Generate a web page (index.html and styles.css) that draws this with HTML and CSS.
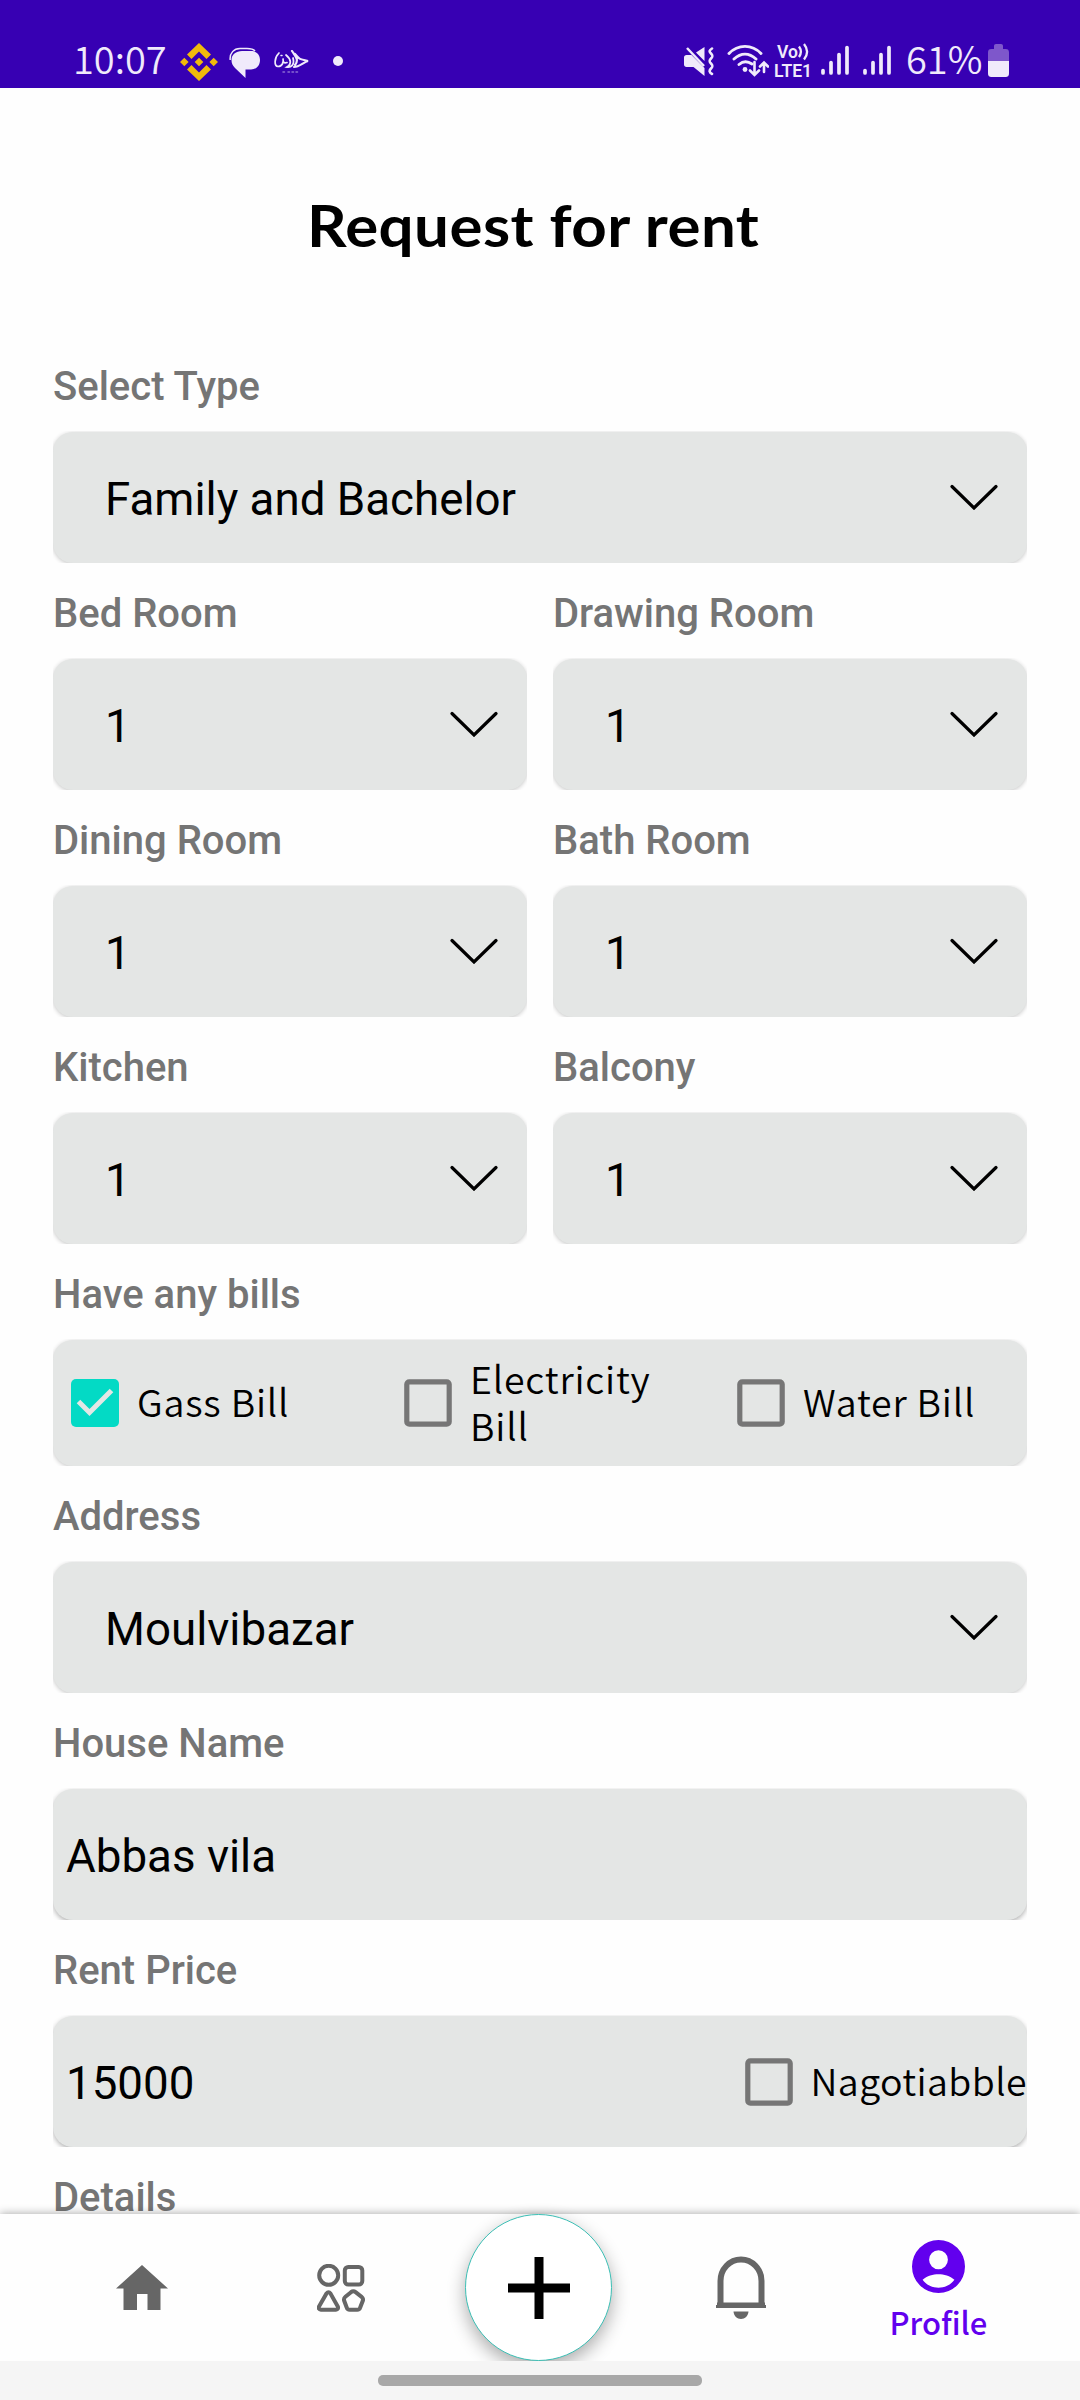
FILE: index.html
```html
<!DOCTYPE html>
<html lang="en">
<head>
<meta charset="utf-8">
<title>Request for rent</title>
<link rel="stylesheet" href="styles.css">
</head>
<body>
<svg class="defs" width="0" height="0" aria-hidden="true">
  <symbol id="chevron" viewBox="0 0 48 26"><path d="M2 2.500 24 24 46 2.500" fill="none" stroke="#000" stroke-width="3.200" stroke-linecap="round"/></symbol>
  <symbol id="box" viewBox="0 0 48 48"><rect x="2.800" y="2.800" width="42.400" height="42.400" rx="2.500" fill="none" stroke="#767676" stroke-width="5.200"/></symbol>
  <symbol id="signal" viewBox="0 0 28 30"><path d="M2 25.500v2.500M10 17.500v10.500M18 9.500v18.500M26 2.500v25.500" fill="none" stroke="#f0eafb" stroke-width="3.700" stroke-linecap="round"/></symbol>
</svg>
<div class="phone">
  <header class="status">
    <div class="status-left">
      <span class="clock">10:07</span>
      <svg class="coin" width="38" height="38" viewBox="0 0 38 38" fill="#f0b90b"><path d="m19 0 12 11.500-4.500 4.500L19 8.500 11.500 16 7 11.500zM19 38 7 26.500l4.500-4.500 7.500 7.500 7.500-7.500 4.500 4.500zM4.300 14.700 8.600 19l-4.300 4.300L0 19zM19 14.700l4.300 4.300-4.300 4.300-4.300-4.300zM33.700 14.700 38 19l-4.300 4.300-4.300-4.300z"/></svg>
      <svg class="chat" width="32" height="32" viewBox="0 0 32 32"><path d="M1.200 13C.5 6 5 1.500 11 1.500h7c4 0 6.500.700 8 2.500" fill="none" stroke="#f0eafb" stroke-width="1.500"/><path d="M13 4h9c5.500 0 9 3.600 9 9s-3.500 9.500-9 9.500h-5.500V31L6 21C3.500 18.500 2.500 16 2.500 13c0-5.500 4.500-9 10.500-9z" fill="#f0eafb"/></svg>
      <svg class="emblem" width="36" height="24" viewBox="0 0 36 24" fill="none" stroke="#f0eafb" stroke-linecap="round"><path d="M5 3C0 8 0 16 4 16.500c4 0 6-4 5-8 0 4 1 5 4 4" stroke-width="1.700"/><path d="M12 5c5 4 6 9 1 12 4 .5 8-2 6-9" stroke-width="1.800"/><path d="M18 1c4 6 7 9 3 14M21 4c4 5 4 5 13 7-4 1-9 6-14 6" stroke-width="2.200"/><path d="M7 5.500h1" stroke-width="1.500"/><path d="M9 22h1.500M14 22h1.500M18 22h1.500M22 22h1.500" stroke="#8b6bd3" stroke-width="1.500"/></svg>
      <span class="dot"></span>
    </div>
    <div class="status-right">
      <svg class="mute" width="30" height="32" viewBox="0 0 30 32"><path d="M0 12.500c0-1.500 1-2.500 2.500-2.500h5l13 13v8L9.500 22h-7C1 22 0 21 0 19.500zM12 7.500 20.500 2v14z" fill="#f0eafb"/><path d="M3 3l17 18" stroke="#f0eafb" stroke-width="2.500"/><path d="M28 3.500c-3 2-3 3-1 5s2 3 0 5-2 3 0 5 2 3 0 5-2 4 1 5.500" fill="none" stroke="#f0eafb" stroke-width="2.600" stroke-linecap="round"/></svg>
      <svg class="wifi" width="42" height="33" viewBox="0 0 42 33" fill="none" stroke="#f0eafb" stroke-width="2.900" stroke-linecap="round"><path d="M2 9.500C11 0 25 0 34 9.500M7 15c7-6.500 15-6.500 22 0M12 20.500c4-3.500 8-4 13-.5"/><circle cx="18" cy="25.500" r="2.400" fill="#f0eafb" stroke="none"/><path d="M27.500 18v12M23 26.500l4.500 4.500 4.500-4.500M37 28V18.500M33 22.500l4-4 4 4" stroke-width="2.600"/></svg>
      <span class="volte"><span class="vo">Vo<svg width="11" height="18" viewBox="0 0 11 18" fill="none" stroke="#f0eafb" stroke-width="2.300"><path d="M1 3.500c2.500 3.500 2.500 7 0 10.500M6 1c4 5 4 10.500 0 15.500"/></svg></span><span class="lte">LTE1</span></span>
      <svg class="signal-a" width="28" height="30"><use href="#signal"/></svg>
      <svg class="signal-b" width="28" height="30"><use href="#signal"/></svg>
      <span class="percent">61%</span>
      <svg class="battery" width="21" height="33" viewBox="0 0 21 33"><path d="M6 5V2c0-1.200.8-2 2-2h5c1.200 0 2 .8 2 2v3h2.500C20 5 21 6 21 8.500V17H0V8.500C0 6 1 5 3.500 5z" fill="#7e57cb"/><path d="M0 17h21v12c0 3-1 4-4 4H4c-3 0-4-1-4-4z" fill="#f0eafb"/></svg>
    </div>
  </header>

  <main class="content">
    <h1 class="title"><span>Request for rent</span></h1>
    <div class="form">
      <section class="field wide"><div class="label">Select Type</div><div class="clip"><div class="card select"><span>Family and Bachelor</span><svg class="chev"><use href="#chevron"/></svg></div></div></section>
      <section class="field"><div class="label">Bed Room</div><div class="clip"><div class="card select"><span>1</span><svg class="chev"><use href="#chevron"/></svg></div></div></section>
      <section class="field"><div class="label">Drawing Room</div><div class="clip"><div class="card select"><span>1</span><svg class="chev"><use href="#chevron"/></svg></div></div></section>
      <section class="field"><div class="label">Dining Room</div><div class="clip"><div class="card select"><span>1</span><svg class="chev"><use href="#chevron"/></svg></div></div></section>
      <section class="field"><div class="label">Bath Room</div><div class="clip"><div class="card select"><span>1</span><svg class="chev"><use href="#chevron"/></svg></div></div></section>
      <section class="field"><div class="label">Kitchen</div><div class="clip"><div class="card select"><span>1</span><svg class="chev"><use href="#chevron"/></svg></div></div></section>
      <section class="field"><div class="label">Balcony</div><div class="clip"><div class="card select"><span>1</span><svg class="chev"><use href="#chevron"/></svg></div></div></section>
      <section class="field wide"><div class="label">Have any bills</div>
        <div class="clip bills"><div class="card checks">
          <div class="check"><svg class="tick" viewBox="0 0 48 48"><rect width="48" height="48" rx="5" fill="#03dac5"/><path d="M7.500 22.500 18.500 33.500 40.500 11.500" fill="none" stroke="#e3e7e5" stroke-width="5"/></svg><span>Gass Bill</span></div>
          <div class="check"><svg class="tick"><use href="#box"/></svg><span>Electricity<br>Bill</span></div>
          <div class="check"><svg class="tick"><use href="#box"/></svg><span>Water Bill</span></div>
        </div></div>
      </section>
      <section class="field wide"><div class="label">Address</div><div class="clip"><div class="card select"><span>Moulvibazar</span><svg class="chev"><use href="#chevron"/></svg></div></div></section>
      <section class="field wide"><div class="label">House Name</div><div class="clip low"><div class="card input"><span>Abbas vila</span></div></div></section>
      <section class="field wide"><div class="label">Rent Price</div><div class="clip low"><div class="card input"><span>15000</span><div class="check nego"><svg class="tick"><use href="#box"/></svg><span>Nagotiabble</span></div></div></div></section>
      <section class="field wide"><div class="label">Details</div></section>
    </div>
  </main>

  <nav class="nav">
    <div class="item"><svg width="52" height="46" viewBox="0 0 52 46"><path d="M26 0 52 23.500h-7.500V45H31.500V29H21v16H7.500V23.500H0z" fill="#666"/></svg></div>
    <div class="item"><svg width="48" height="48" viewBox="0 0 48 48" fill="none" stroke="#666" stroke-width="4"><circle cx="11.700" cy="11.300" r="9.500"/><rect x="27.800" y="3" width="17.500" height="17.500" rx="3.500"/><path d="M9.500 29.500q2-2.500 4 0l7.300 13q1 3-2 3.300H4q-3-.3-2-3.300z"/><path d="M34 28.200q2.300-1.800 4.600 0l6 4.600q2 1.600 1.200 4L43.200 43.500q-.7 2.300-3 2.300h-7.500q-2.300 0-3-2.300l-2.500-6.700q-.8-2.400 1.200-4z"/></svg></div>
    <div class="item"><div class="fab"><svg width="62" height="62" viewBox="0 0 62 62"><path d="M31 0v62M0 31h62" stroke="#000" stroke-width="9"/></svg></div></div>
    <div class="item"><svg class="bell" width="50" height="63" viewBox="0 0 50 63"><path d="M4.500 50V25a20.500 21.500 0 0 1 41 0v25" fill="none" stroke="#666" stroke-width="6"/><path d="M1 46.500h48V49h1v3H0v-3h1zM17.500 55.500h15c-.3 4.500-3.500 7.500-7.500 7.500s-7.200-3-7.500-7.500z" fill="#666"/></svg></div>
    <div class="item profile"><svg width="53" height="53" viewBox="2 2 20 20" fill="#6200ee"><path fill-rule="evenodd" d="M12 2a10 10 0 1 0 0 20 10 10 0 0 0 0-20zM12 5.900a3.550 3.550 0 1 1 0 7.100 3.550 3.550 0 0 1 0-7.100zM12 20c-2.500 0-4.700-1.100-6-3 1.600-1.500 4-2.100 6-2.100s4.400.6 6 2.100c-1.300 1.900-3.500 3-6 3z"/></svg><span>Profile</span></div>
  </nav>
  <footer class="gesture"><div class="handle"></div></footer>
</div>
</body>
</html>
```
FILE: styles.css
```css
* { box-sizing: border-box; }
body { margin: 0; background: #fefefe; font-family: Roboto, sans-serif; }
svg { display: block; flex: none; }
.defs { position: absolute; }
.phone { width: 1080px; height: 2400px; display: flex; flex-direction: column; overflow: hidden; background: #fefefe; }

.status { height: 88px; flex: none; display: flex; justify-content: space-between; align-items: flex-start; padding: 43px 71px 0 73px; background: #3700b3; color: #f0eafb; }
.status-left, .status-right { display: flex; align-items: flex-start; }
.clock, .percent { font: 350 38px/38px "Noto Sans CJK SC", sans-serif; white-space: nowrap; height: 38px; margin-top: -4px; }
.clock { width: 107px; }
.percent { width: 82px; margin-left: 15px; }
.chat { margin: 4px 0 0 11px; }
.emblem { margin: 7px 0 0 13px; }
.dot { width: 10px; height: 10px; border-radius: 50%; background: #f0eafb; margin: 13px 0 0 23px; }
.mute { margin-top: 2px; }
.wifi { margin: 1px 0 0 13px; }
.volte { width: 40px; margin: 0 0 0 5px; font: 600 17.500px/19px Roboto, sans-serif; }
.vo { display: flex; padding-left: 3px; height: 19px; }
.lte { display: block; }
.signal-a { margin: 2px 0 0 7px; }
.signal-b { margin: 2px 0 0 14px; }
.battery { margin-top: 1px; }

.content { flex: 1; min-height: 0; overflow: hidden; }
.title { margin: 0; height: 248px; padding: 102px 0 0 307px; font: 700 57px/70px Lato, sans-serif; letter-spacing: .4px; color: #000; white-space: nowrap; }
.title span { display: inline-block; transform: scaleX(1.085); transform-origin: left; }
.form { display: grid; grid-template-columns: 474px 474px; column-gap: 26px; padding: 0 53px; }
.wide { grid-column: 1 / -1; }
.label { height: 95px; padding-top: 27px; font-weight: 500; font-size: 40px; line-height: 47px; color: #757575; }
.clip { height: 132px; overflow: hidden; padding-top: 1px; border-radius: 6px 6px 2px 2px; }
.card { height: 131px; border-radius: 20px; background: #e4e6e5; box-shadow: 0 1px 4px rgba(0, 0, 0, .22); display: flex; align-items: center; font-size: 45.700px; line-height: 53px; color: #000; }
.low .card { box-shadow: 0 2px 5px rgba(0, 0, 0, .3); }
.select { justify-content: space-between; padding: 4px 29px 0 52px; }
.chev { width: 48px; height: 26px; margin-top: -5px; }
.input { justify-content: space-between; padding: 4px 0 0 13px; }
.bills { height: 127px; }
.bills .card { height: 126px; }
.checks { display: grid; grid-template-columns: 333px 333px 1fr; padding-left: 18px; }
.check { display: flex; align-items: center; font: 350 37.500px/47px "Noto Sans CJK SC", sans-serif; letter-spacing: .8px; white-space: nowrap; }
.check span { margin-top: -5px; }
.nego { letter-spacing: .4px; margin-top: -4px; }
.tick { width: 48px; height: 48px; margin-right: 18px; }

.nav { position: relative; height: 147px; flex: none; display: flex; padding: 0 42px; background: #fefefe; box-shadow: 0 -1px 8px rgba(0, 0, 0, .3); }
.item { flex: 1; display: flex; flex-direction: column; align-items: center; justify-content: center; }
.fab { width: 147px; height: 147px; border-radius: 50%; border: 1px solid #3cbfb5; background: #fff; box-shadow: 0 7px 18px rgba(0, 0, 0, .32); display: flex; align-items: center; justify-content: center; margin-right: 3px; }
.bell { margin-left: 3px; }
.profile { padding-top: 6px; }
.profile span { font: 500 31px/40px "Noto Sans CJK SC", sans-serif; color: #6200ee; margin-top: 9px; }
.gesture { position: relative; height: 39px; flex: none; display: flex; justify-content: center; align-items: flex-start; padding-top: 14px; background: #f5f5f5; }
.handle { width: 324px; height: 11px; border-radius: 5px; background: #a8a8a8; }
```
